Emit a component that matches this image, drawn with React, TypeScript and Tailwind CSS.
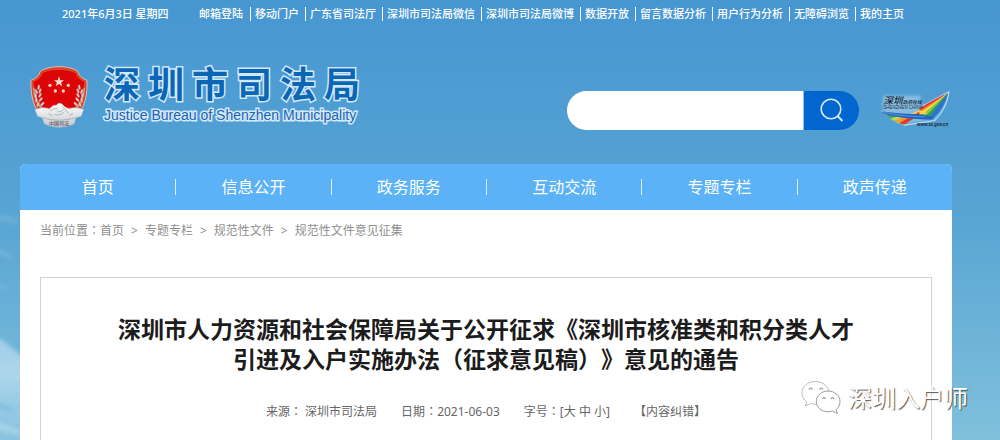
import React from "react";

const topLinks = [
  "邮箱登陆",
  "移动门户",
  "广东省司法厅",
  "深圳市司法局微信",
  "深圳市司法局微博",
  "数据开放",
  "留言数据分析",
  "用户行为分析",
  "无障碍浏览",
  "我的主页",
];

const navItems = ["首页", "信息公开", "政务服务", "互动交流", "专题专栏", "政声传递"];

const crumbs = ["首页", "专题专栏", "规范性文件", "规范性文件意见征集"];

/* Full-width colon, centred in its cell */
function Colon() {
  return <span className="font-['Noto_Sans_CJK_TC',sans-serif] leading-none">：</span>;
}

function Clouds() {
  return (
    <svg
      className="pointer-events-none absolute bottom-0 left-0 h-60 w-24"
      viewBox="0 0 96 240"
      aria-hidden="true"
    >
      <defs>
        <filter id="soft" x="-50%" y="-50%" width="200%" height="200%">
          <feGaussianBlur stdDeviation="2" />
        </filter>
        <linearGradient id="cloud" x1="0" y1="0" x2="0" y2="1">
          <stop offset="0" stopColor="#9ccce6" />
          <stop offset="0.35" stopColor="#acd6eb" />
          <stop offset="0.7" stopColor="#92c8e2" />
          <stop offset="1" stopColor="#86c1de" />
        </linearGradient>
      </defs>
      <path d="M-10 132Q8 143 32 166V250H-10z" fill="url(#cloud)" filter="url(#soft)" />
      <g filter="url(#soft)">
        <path d="M-8 200 12 208 14 212-8 206z" fill="#74b5d8" opacity=".7" />
        <path d="M-8 220 24 232 26 237-8 228z" fill="#b2daec" opacity=".7" />
        <path d="M-8 14 16 18 18 24-8 20zM-8 46 10 54 14 60-8 52zM-8 80 6 86 8 90-8 86z" fill="#8cc4e2" opacity=".4" />
      </g>
    </svg>
  );
}

function Emblem() {
  const leaves = [
    [50, 112, -20],
    [48, 124, -5],
    [50, 137, 5],
    [55, 150, 15],
    [61, 110, 20],
    [61, 123, 30],
    [63, 136, 40],
    [68, 149, 45],
    [57, 99, 10],
  ];
  const branch = leaves.map(([x, y, r]) => (
    <ellipse
      key={`${x}-${y}`}
      cx={x}
      cy={y}
      rx="3.2"
      ry="7.5"
      transform={`rotate(${r} ${x} ${y})`}
      fill="#ded2cf"
      stroke="#b0807d"
      strokeWidth="1"
    />
  ));
  return (
    <svg className="h-16 w-15 shrink-0" viewBox="28 32 180 192" aria-hidden="true">
      <defs>
        <linearGradient id="silver" x1="0" y1="0" x2="0" y2="1">
          <stop offset="0" stopColor="#ffffff" />
          <stop offset="1" stopColor="#c3c6ca" />
        </linearGradient>
      </defs>
      <path
        d="M118 37C93 37 72 43 61 52C59 64 49 72 34 78C33 106 36 132 46 156C60 186 88 204 118 212C148 204 176 186 190 156C200 132 203 106 202 78C187 72 177 64 175 52C164 43 143 37 118 37z"
        fill="#dd4426"
        stroke="#dcc0b6"
        strokeWidth="3"
      />
      <path
        d="M118 47C96 47 77 51 68 57C65 69 56 77 42 83C44 112 52 140 72 160H164C184 140 192 112 194 83C180 77 171 69 168 57C159 51 140 47 118 47z"
        fill="#dd0408"
      />
      <path d="M42 100C43 128 52 152 74 168M194 100C193 128 184 152 162 168" fill="none" stroke="#c5b2af" strokeWidth="4" />
      {branch}
      <g transform="matrix(-1 0 0 1 236 0)">{branch}</g>
      <path
        d="M46 166C62 160 76 158 88 164L100 154C104 150 112 156 112 150C116 146 124 144 130 152L136 158L148 163C164 158 178 160 192 166L184 186L168 190L164 208C134 222 102 222 74 208L68 190L54 186z"
        fill="url(#silver)"
        stroke="#b8bcc0"
        strokeWidth="1.5"
      />
      <path
        d="M92 170C100 160 108 166 116 160M104 180C114 184 126 182 134 172M128 156C136 164 142 170 146 178M112 168C118 176 126 172 132 164M86 178 98 184M150 184 160 176M70 190C100 200 136 200 166 190"
        fill="none"
        stroke="#a4a9af"
        strokeWidth="2.5"
      />
      <path
        d="M118 66 122 77.500H133L124.500 84.500 127.500 95.500 118 89 108.500 95.500 111.500 84.500 103 77.500H114z"
        fill="#f8ddd2"
      />
      <g fill="#f5cfc4">
        <circle cx="91" cy="93" r="5" />
        <circle cx="146" cy="93" r="5" />
        <circle cx="107" cy="110" r="5" />
        <circle cx="131" cy="110" r="5" />
      </g>
      <text
        x="118"
        y="211"
        textAnchor="middle"
        fontSize="15"
        fontWeight="700"
        fill="#6f7378"
        fontFamily="Noto Sans CJK SC, sans-serif"
      >
        中国司法
      </text>
    </svg>
  );
}

function CityLogo() {
  return (
    <svg className="h-10 w-18" viewBox="62 34 212 114" role="img" aria-label="深圳政府在线">
      <defs>
        <filter id="glow" x="-20%" y="-20%" width="140%" height="140%">
          <feGaussianBlur stdDeviation="5" />
        </filter>
      </defs>
      <path
        d="M74 94V48H184V84L264 40 256 76 222 118 136 134 100 120z"
        fill="#d8ebf8"
        opacity=".4"
        filter="url(#glow)"
      />
      <path
        d="M70 94 138 136 226 122C250 98 264 70 268 38L190 80"
        fill="none"
        stroke="#e6f3fb"
        strokeWidth="3"
        opacity=".8"
      />
      <path d="M265 41C240 52 210 68 186 84L176 96 192 92z" fill="#e8352b" />
      <path d="M265 41 190 88 168 100 194 97z" fill="#f58a2c" />
      <path d="M265 41 188 96 170 103 200 102z" fill="#f9e04a" />
      <path d="M265 41 196 98 184 105 210 107z" fill="#8cc84b" />
      <path d="M265 41 204 104 198 110 220 112z" fill="#2fa35a" />
      <path d="M265 41C258 72 244 96 218 119L200 115 214 107z" fill="#2b74cf" />
      <path d="M180 92 150 106 112 127 134 132 176 108 204 100z" fill="#f7d648" />
      <path d="M180 96 126 129 138 133 182 106z" fill="#e8392c" />
      <path d="M80 105 96 117 124 108z" fill="#43a65b" />
      <path d="M96 117 112 125 142 110 122 107z" fill="#bcd94a" />
      <path d="M108 123 128 131 154 113 140 109z" fill="#f59a2e" />
      <path d="M122 129 134 134 162 114 154 111z" fill="#e23a2d" />
      <path d="M72 95C104 101 150 103 190 104L224 112 216 120C160 118 108 114 72 100z" fill="#1f66c4" />
      <path d="M74 97C116 108 156 110 198 111" fill="none" stroke="#d9ecfa" strokeWidth="1" />
      <text
        x="75"
        y="72"
        fontSize="28"
        fontWeight="500"
        fontStyle="italic"
        fontFamily="Noto Sans CJK SC, sans-serif"
        fill="#16202a"
      >
        深圳
      </text>
      <text
        x="132"
        y="72"
        fontSize="14"
        fontWeight="500"
        fontStyle="italic"
        fontFamily="Noto Sans CJK SC, sans-serif"
        fill="#16202a"
      >
        政府在线
      </text>
      <text x="75" y="88" fontSize="13" fontFamily="Liberation Sans, sans-serif" fill="#27323c">
        SHENZHEN CHINA
      </text>
      <text
        x="174"
        y="137"
        fontSize="13"
        fontStyle="italic"
        fontWeight="700"
        fontFamily="Liberation Sans, sans-serif"
        fill="#1c2731"
      >
        www.sz.gov.cn
      </text>
    </svg>
  );
}

function WechatMark() {
  return (
    <svg className="h-9 w-10" viewBox="0 0 40 36" aria-hidden="true">
      <g fill="#fff" stroke="#8f8f8f" strokeLinejoin="round">
        <path
          d="M14.500 1.500C7 1.500 1 6.500 1 13C1 16.600 2.800 19.700 5.600 21.800L4.500 26L9.500 23.500C11 24 12.700 24.300 14.500 24.300C22 24.300 28 19.200 28 13C28 6.500 22 1.500 14.500 1.500z"
          strokeWidth=".6"
        />
        <path
          d="M27 11C20.500 11 15.300 15.600 15.300 21.400C15.300 27.200 20.500 31.800 27 31.800C28.600 31.800 30 31.500 31.400 31L36.300 33.500L35.200 29.500C37.700 27.500 39 24.700 39 21.400C39 15.600 33.500 11 27 11z"
          strokeWidth=".9"
        />
      </g>
      <path
        d="M8 9.500Q9.800 6.500 11.500 9.500M18.500 9.500Q20.300 6.500 22 9.500M21.500 19Q23 16 24.500 19M30 19Q31.500 16 33 19"
        fill="none"
        stroke="#8a8a8a"
        strokeWidth="1.200"
      />
    </svg>
  );
}

export default function App() {
  return (
    <div className="relative flex min-h-screen flex-col overflow-hidden bg-linear-to-b from-[#4696d2] via-[#58a5d3] to-[#80c0dc] font-['Noto_Sans','Noto_Sans_CJK_SC',sans-serif]">
      <Clouds />

      <div className="relative flex items-center pt-[7px] pl-[62px] text-[11px] leading-[14px] font-medium whitespace-nowrap text-white">
        <span className="w-[137px] shrink-0">2021年6月3日 星期四</span>
        <ul className="flex">
          {topLinks.map((label, i) => (
            <li key={label} className={i === 0 ? "pr-[7px]" : "border-l border-white pr-1.5 pl-1"}>
              <a href="#">{label}</a>
            </li>
          ))}
        </ul>
      </div>

      <header className="relative mt-9 mr-[49px] mb-7 ml-[29px] flex h-[79px] items-center">
        <Emblem />
        <div className="ml-[15px] shrink-0 pb-2">
          <h1 className="flex gap-2 text-4xl leading-[44px] font-bold text-[#0b66b5] [-webkit-text-stroke:3px_#d3e9f9] [paint-order:stroke_fill]">
            {[..."深圳市司法局"].map((char) => (
              <span key={char}>{char}</span>
            ))}
          </h1>
          <p className="font-['Liberation_Sans',sans-serif] text-sm leading-4 text-[#2163b0] [-webkit-text-stroke:3px_#d3e9f9] [paint-order:stroke_fill]">
            Justice Bureau of Shenzhen Municipality
          </p>
        </div>
        <form className="mt-[27px] ml-auto flex h-[39px] w-[292px]" onSubmit={(e) => e.preventDefault()}>
          <input
            type="search"
            aria-label="搜索"
            className="min-w-0 flex-1 rounded-l-full bg-white px-5 text-sm text-gray-700 outline-none"
          />
          <button
            type="submit"
            aria-label="搜索"
            className="flex w-14 items-center justify-center rounded-r-full border-l border-[#8fc0ee] bg-[#0166cf]"
          >
            <svg className="size-6" viewBox="0 0 24 24" fill="none" stroke="#d5e8fb" aria-hidden="true">
              <circle cx="11" cy="11" r="9.800" strokeWidth="1.600" />
              <path d="M17.500 18 22.500 23" strokeWidth="2" />
            </svg>
          </button>
        </form>
        <a href="#" className="mt-[27px] ml-5">
          <CityLogo />
        </a>
      </header>

      <main className="relative mr-12 ml-5 flex flex-1 flex-col rounded-t-md bg-white">
        <nav className="h-[46px] rounded-t-md bg-[#5bb2f7]">
          <ul className="grid h-full grid-cols-6 items-center text-center text-base leading-4 text-white">
            {navItems.map((label, i) => (
              <li key={label} className={i === 0 ? "" : "border-l border-[#d9eefe]"}>
                <a href="#">{label}</a>
              </li>
            ))}
          </ul>
        </nav>

        <div className="mt-[11px] ml-5 flex text-xs leading-5 text-[#8f8f8f]">
          <span>
            当前位置
            <Colon />
          </span>
          <ol className="flex">
            {crumbs.map((label, i) => (
              <li key={label}>
                {i > 0 && <span className="px-[7px]">&gt;</span>}
                <a href="#">{label}</a>
              </li>
            ))}
          </ol>
        </div>

        <article className="mx-5 mt-9 flex-1 border border-b-0 border-[#d0d3d3] px-4 pt-9 pb-4 text-center">
          <h2 className="text-[23px] leading-[30px] font-bold text-[#1c1c1c] [text-spacing-trim:space-all]">
            深圳市人力资源和社会保障局关于公开征求《深圳市核准类和积分类人才
            <br />
            引进及入户实施办法（征求意见稿）》意见的通告
          </h2>
          <div className="mt-7 flex justify-center gap-6 text-xs leading-5 text-[#666]">
            <span>
              来源
              <Colon /> 深圳市司法局
            </span>
            <span>
              日期
              <Colon />
              2021-06-03
            </span>
            <span>
              字号
              <Colon />[<button type="button">大</button> <button type="button">中</button>{" "}
              <button type="button">小</button>]
            </span>
            <a href="#">【内容纠错】</a>
          </div>
        </article>
      </main>

      <div className="pointer-events-none absolute right-8 bottom-6 flex items-center gap-[7px]">
        <WechatMark />
        <span className="text-2xl leading-9 text-white [text-shadow:1px_1px_1px_#555]">深圳入户师</span>
      </div>
    </div>
  );
}
